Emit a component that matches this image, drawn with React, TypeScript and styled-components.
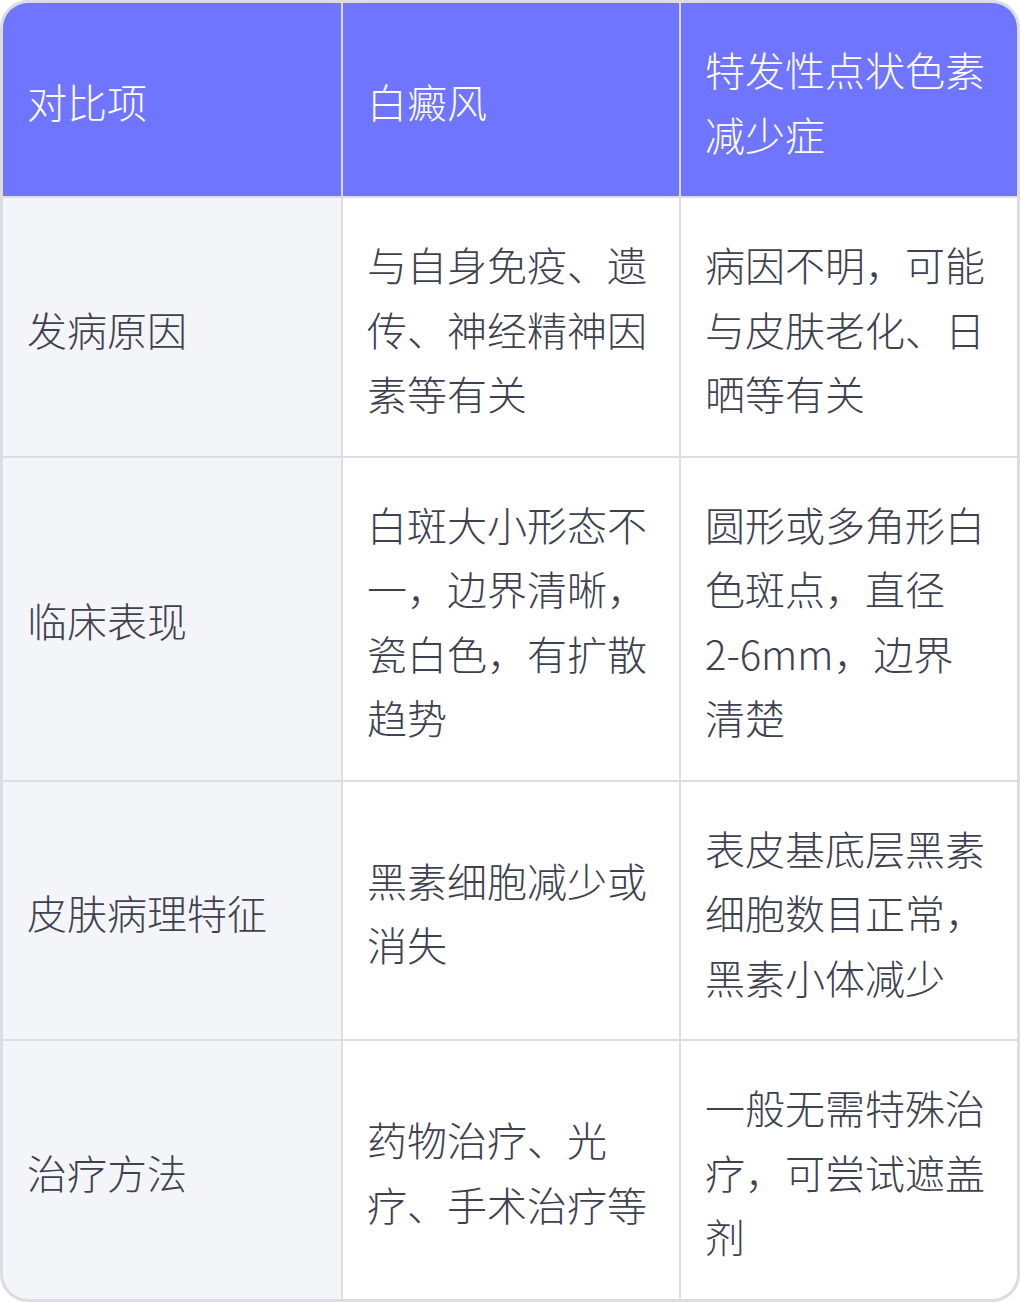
import React from "react";
import styled, { createGlobalStyle } from "styled-components";

const Global = createGlobalStyle`
  html, body { margin: 0; padding: 0; background: #ffffff; }
  body { font-family: "Noto Sans CJK SC", "Noto Sans", sans-serif; }
`;

const Table = styled.div`
  width: 1020px;
  box-sizing: border-box;
  border: 3px solid #dcdce2;
  border-radius: 28px;
  overflow: hidden;
  background: #dcdce2;
  display: grid;
  grid-template-columns: 338px 1fr 1fr;
  gap: 2px;
`;

const Cell = styled.div<{ $kind: "head" | "label" | "body" }>`
  padding: 34px 24px 30px;
  display: flex;
  align-items: center;
  font-size: 40px;
  line-height: 64.5px;
  font-weight: 300;
  color: ${(p) => (p.$kind === "head" ? "#ffffff" : "#3e414f")};
  background: ${(p) =>
    p.$kind === "head" ? "#7075ff" : p.$kind === "label" ? "#f4f5f9" : "#ffffff"};
`;

const Text = styled.span``;

const NoWrap = styled.span`
  white-space: nowrap;
`;

const header = ["对比项", "白癜风", "特发性点状色素减少症"];
const rows: [string, React.ReactNode, React.ReactNode][] = [
  ["发病原因", "与自身免疫、遗传、神经精神因素等有关", "病因不明，可能与皮肤老化、日晒等有关"],
  [
    "临床表现",
    "白斑大小形态不一，边界清晰，瓷白色，有扩散趋势",
    <>圆形或多角形白色斑点，直径<NoWrap>2-6mm</NoWrap>，边界清楚</>,
  ],
  ["皮肤病理特征", "黑素细胞减少或消失", "表皮基底层黑素细胞数目正常，黑素小体减少"],
  ["治疗方法", "药物治疗、光疗、手术治疗等", "一般无需特殊治疗，可尝试遮盖剂"],
];

export default function App() {
  return (
    <>
      <Global />
      <Table>
        {header.map((h) => (
          <Cell key={h} $kind="head">
            <Text>{h}</Text>
          </Cell>
        ))}
        {rows.map((r) => (
          <React.Fragment key={r[0]}>
            <Cell $kind="label"><Text>{r[0]}</Text></Cell>
            <Cell $kind="body"><Text>{r[1]}</Text></Cell>
            <Cell $kind="body"><Text>{r[2]}</Text></Cell>
          </React.Fragment>
        ))}
      </Table>
    </>
  );
}
